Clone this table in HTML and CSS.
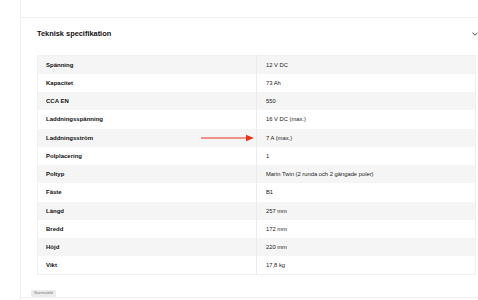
FILE: index.html
```html
<!DOCTYPE html>
<html lang="sv">
<head>
<meta charset="utf-8">
<title>Teknisk specifikation</title>
<link rel="stylesheet" href="styles.css">
</head>
<body>
<div class="page">
  <div class="topbar"></div>
  <section class="section">
    <div class="head">
      <h2 class="title">Teknisk specifikation</h2>
      <svg class="chev" width="6" height="4" viewBox="0 0 6 4"><path d="M0.5 0.8 L3 3.2 L5.5 0.8" fill="none" stroke="#333" stroke-width="0.9"/></svg>
    </div>
    <div class="tablewrap">
      <table class="spec">
        <colgroup><col class="c1"><col class="c2"></colgroup>
        <tr><th>Spänning</th><td>12 V DC</td></tr>
        <tr><th>Kapacitet</th><td>73 Ah</td></tr>
        <tr><th>CCA EN</th><td>550</td></tr>
        <tr><th>Laddningsspänning</th><td>16 V DC (max.)</td></tr>
        <tr><th>Laddningsström</th><td>7 A (max.)</td></tr>
        <tr><th>Polplacering</th><td>1</td></tr>
        <tr><th>Poltyp</th><td>Marin Twin (2 runda och 2 gängade poler)</td></tr>
        <tr><th>Fäste</th><td>B1</td></tr>
        <tr><th>Längd</th><td>257 mm</td></tr>
        <tr><th>Bredd</th><td>172 mm</td></tr>
        <tr><th>Höjd</th><td>220 mm</td></tr>
        <tr><th>Vikt</th><td>17,8 kg</td></tr>
      </table>
      <svg class="arrow" width="54" height="8" viewBox="0 0 54 8"><line x1="0" y1="4" x2="47" y2="4" stroke="#e8321e" stroke-width="1.2"/><path d="M45 0.8 L53 4 L45 7.2 Z" fill="#e8321e"/></svg>
    </div>
  </section>
  <div class="next"></div>
  <span class="badge">Skärmavbild</span>
</div>
</body>
</html>
```
FILE: styles.css
```css
html, body {
  margin: 0;
  padding: 0;
  background: #fff;
}
body {
  font-family: "Liberation Sans", Arial, sans-serif;
  color: #1a1a1a;
  width: 478px;
  height: 300px;
  overflow: hidden;
}
.page {
  position: relative;
  margin-left: 20px;
  border-left: 1px solid #ededed;
  height: 300px;
}
.topbar {
  height: 17px;
  border-bottom: 1px solid #eeeeee;
}
.section {
  height: 279px;
  padding: 0 1px 0 16px;
}
.head {
  height: 37px;
  display: flex;
  align-items: flex-start;
  justify-content: space-between;
  padding-top: 11px;
  box-sizing: border-box;
}
.title {
  margin: 0;
  font-size: 7.4px;
  line-height: 10px;
  font-weight: 700;
  color: #111;
}
.chev {
  margin-top: 3px;
  margin-right: -1px;
}
.tablewrap {
  position: relative;
  width: 439px;
}
.spec {
  width: 439px;
  border-collapse: collapse;
  border: 1px solid #f0f0f0;
  table-layout: fixed;
}
.c1 {
  width: 219px;
}
.spec tr {
  height: 18.25px;
}
.spec tr:nth-child(odd) {
  background: #f5f5f5;
}
.spec th, .spec td {
  padding: 0 9px;
  font-size: 6px;
  line-height: 8px;
  text-align: left;
  vertical-align: middle;
  white-space: nowrap;
}
.spec th {
  font-weight: 700;
  color: #111;
  border-right: 1px solid #ececec;
  padding-left: 8px;
}
.spec td {
  font-weight: 400;
  color: #222;
  font-size: 5.8px;
}
.arrow {
  position: absolute;
  left: 164px;
  top: 79px;
}
.next {
  border-top: 1px solid #f0f0f0;
}
.badge {
  position: absolute;
  left: 10px;
  top: 290px;
  height: 7px;
  padding: 0 3px;
  background: #ececec;
  border-radius: 1.5px;
  font-size: 3.4px;
  line-height: 7px;
  color: #777;
}
```
